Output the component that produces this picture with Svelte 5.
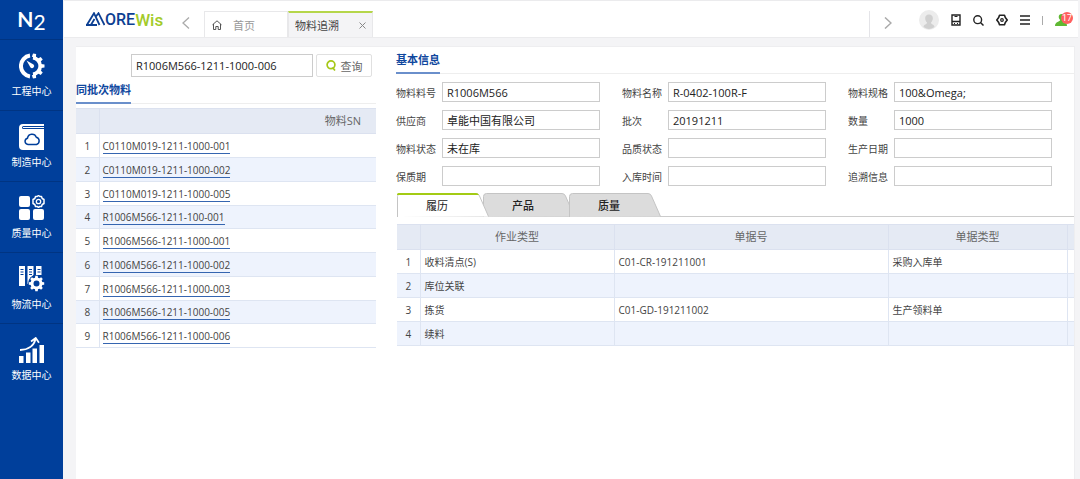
<script>
  const nav = [
    { label: '工程中心', icon: 'gear' },
    { label: '制造中心', icon: 'book' },
    { label: '质量中心', icon: 'grid' },
    { label: '物流中心', icon: 'files' },
    { label: '数据中心', icon: 'chart' }
  ];
  const serials = [
    'C0110M019-1211-1000-001',
    'C0110M019-1211-1000-002',
    'C0110M019-1211-1000-005',
    'R1006M566-1211-100-001',
    'R1006M566-1211-1000-001',
    'R1006M566-1211-1000-002',
    'R1006M566-1211-1000-003',
    'R1006M566-1211-1000-005',
    'R1006M566-1211-1000-006'
  ];
  const fields = [
    ['物料料号', 'R1006M566'],
    ['物料名称', 'R-0402-100R-F'],
    ['物料规格', '100&Omega;'],
    ['供应商', '卓能中国有限公司'],
    ['批次', '20191211'],
    ['数量', '1000'],
    ['物料状态', '未在库'],
    ['品质状态', ''],
    ['生产日期', ''],
    ['保质期', ''],
    ['入库时间', ''],
    ['追溯信息', '']
  ];
  const records = [
    ['收料清点(S)', 'C01-CR-191211001', '采购入库单'],
    ['库位关联', '', ''],
    ['拣货', 'C01-GD-191211002', '生产领料单'],
    ['续料', '', '']
  ];
  const tabs = ['履历', '产品', '质量'];
  const teeth = [0, 45, 90, 135, 180, 225, 270, 315];
  const halfTeeth = [12, 51, 90, 129, 168];
  let active = $state(0);
  let query = $state('R1006M566-1211-1000-006');
</script>

<div class="app">
  <nav class="side">
    <a class="brand" href="#home"><span class="n">N</span><span class="two">2</span></a>
    {#each nav as item}
      <a class="item" href="#{item.icon}">
        <svg width="26" height="26" viewBox="0 0 26 26" aria-hidden="true">
          {#if item.icon === 'gear'}
            <path d="M11 2.600A10.500 10.500 0 0 0 11 23.400" fill="none" stroke="#fff" stroke-width="4" />
            <path d="M14 4.600A8.500 8.500 0 0 1 14 21.400" fill="none" stroke="#fff" stroke-width="3.600" />
            {#each halfTeeth as angle}
              <path d="M10.900 4l.5-3.500h3.200l.5 3.500z" fill="#fff" transform="rotate({angle} 13 13)" />
            {/each}
            <path d="M7.500 7.500l7 4a2.100 2.100 0 1 1-3 3z" fill="#fff" />
          {:else if item.icon === 'book'}
            <path d="M4 0h21v2H4.500a1.500 1.500 0 0 0 0 3H25v21H4a4 4 0 0 1-4-4V4a4 4 0 0 1 4-4z" fill="#fff" />
            <path d="M4 3.500h21" stroke="#fff" stroke-width="1" />
            <path d="M9 20.500a3.200 3.200 0 0 1-.5-6.300 4.600 4.600 0 0 1 8.800-1 3.800 3.800 0 0 1 .2 7.300z" fill="none" stroke="#003f9b" stroke-width="1.500" />
          {:else if item.icon === 'grid'}
            <rect x="0" y="1" width="11" height="11" rx="2" fill="#fff" />
            <rect x="0" y="14" width="11" height="11" rx="2" fill="#fff" />
            <rect x="14" y="14" width="11" height="11" rx="2" fill="#fff" />
            <path d="M16.500 1.500h1.700L19.500.5l1.300 1h1.700l.7 2 1.800 1v4l-1.800 1-.7 2h-1.700l-1.300.8-1.300-.8h-1.700l-.7-2-1.800-1v-4l1.800-1z" fill="none" stroke="#fff" stroke-width="1.500" stroke-linejoin="round" />
            <circle cx="19.500" cy="6.500" r="2.200" fill="none" stroke="#fff" stroke-width="1.300" />
          {:else if item.icon === 'files'}
            <path d="M0 0h6v20H0zM8.500 0h6v9l-3.500 3-.5 5-2 1zM17 0h5.500v9H17z" fill="#fff" />
            <path d="M1.500 3.500h3M1.500 6h3M1.500 8.500h3M10 3.500h3M10 6h3M10 8.500h3M18.500 3.500h3M18.500 6h3" stroke="#003f9b" />
            <circle cx="17.500" cy="17.500" r="8.500" fill="#003f9b" />
            <circle cx="17.500" cy="17.500" r="4.500" fill="none" stroke="#fff" stroke-width="3" />
            {#each teeth as angle}
              <path d="M15.900 12.500l.4-2.700h2.400l.4 2.700z" fill="#fff" transform="rotate({angle} 17.500 17.500)" />
            {/each}
          {:else}
            <path d="M0 19h4.500v7H0zM7 15.500h4.500V26H7zM13.500 11.500H18V26h-4.500zM20.500 8H25v18h-4.500z" fill="#fff" />
            <path d="M1 13C9 13 15 9 16.500 2M12 4.500L16.700 1l3.300 4.800" fill="none" stroke="#fff" stroke-width="1.800" />
          {/if}
        </svg>
        <span>{item.label}</span>
      </a>
    {/each}
  </nav>

  <div class="main">
    <header class="top">
      <a class="logo" href="#home">
        <svg width="19" height="14" viewBox="0 0 19 14" aria-hidden="true">
          <path d="M0 13H11M1 12.800L8 1.200 13.500 13M5 12.800L8.500 7M9.500 5L12.500 1.200 18.500 13" fill="none" stroke="#0c3f92" stroke-width="1.800" />
        </svg><span class="ore">ORE</span><span class="wis">Wis</span>
      </a>
      <button class="arrow left" aria-label="向左">
        <svg width="8" height="12" viewBox="0 0 8 12"><path d="M7 .5L1 6l6 5.500" fill="none" stroke="#aaa" stroke-width="1.300" /></svg>
      </button>
      <div class="pages">
        <button class="page">
          <svg width="10" height="10" viewBox="0 0 10 10"><path d="M.5 4.800L5 .8l4.500 4M1.500 4v5.500h2.300v-3h2.400v3h2.300V4" fill="none" stroke="#555" /></svg>
          首页
        </button>
        <div class="page current">
          <span>物料追溯</span>
          <button class="close" aria-label="关闭"><svg width="7" height="7" viewBox="0 0 7 7"><path d="M.5.5l6 6M6.500.5l-6 6" stroke="#888" /></svg></button>
        </div>
      </div>
      <button class="arrow right" aria-label="向右">
        <svg width="8" height="12" viewBox="0 0 8 12"><path d="M1 .5L7 6l-6 5.500" fill="none" stroke="#aaa" stroke-width="1.500" /></svg>
      </button>
      <div class="tools">
        <button aria-label="用户">
          <svg width="20" height="20" viewBox="0 0 20 20"><circle cx="10" cy="10" r="10" fill="#ececec" /><path d="M10 4.500c5 0 4.500 6 2 8 0 2 3 1.500 3.500 4.500a9 9 0 0 1-11 0C5 14 8 14.500 8 12.500c-2.500-2-3-8 2-8z" fill="#d0d0d0" /></svg>
        </button>
        <button aria-label="终端">
          <svg width="10" height="12" viewBox="0 0 10 12"><path d="M1 1h8v10H1zM1 7.500h8" fill="none" stroke="#222" stroke-width="1.400" /><path d="M3.500 2.500h3M3 9.500h1M6 9.500h1" stroke="#222" /></svg>
        </button>
        <button aria-label="搜索">
          <svg width="11" height="11" viewBox="0 0 11 11"><circle cx="4.700" cy="4.700" r="3.900" fill="none" stroke="#222" stroke-width="1.400" /><path d="M7.500 7.500l3 3" stroke="#222" stroke-width="1.500" /></svg>
        </button>
        <button aria-label="设置">
          <svg width="12" height="12" viewBox="0 0 12 12"><path d="M3.500 1.300h5L9.300 3.500 11.200 6 9.300 8.500l-.8 2.200h-5L2.700 8.500.8 6l1.900-2.500z" fill="none" stroke="#222" stroke-width="1.600" stroke-linejoin="round" /><circle cx="6" cy="6" r="1.300" fill="none" stroke="#222" stroke-width="1.200" /></svg>
        </button>
        <button aria-label="菜单">
          <svg width="10" height="10" viewBox="0 0 10 10"><path d="M0 1h10M0 5h10M0 9h10" stroke="#222" stroke-width="1.700" /></svg>
        </button>
        <span class="bar"></span>
        <button class="notice" aria-label="消息">
          <svg width="12" height="12" viewBox="0 0 12 12"><path d="M6.500 0c3.500 0 3.300 4.500 1.300 5.800 0 1.500 4.200 1 4.200 6.200H0C0 7.500 5.200 8 5.200 5.800 3.200 4.500 3 0 6.500 0z" fill="#5fb832" /></svg>
          <b>17</b>
        </button>
      </div>
    </header>

    <div class="panel">
      <section class="list">
        <form class="search" onsubmit={(e) => e.preventDefault()}>
          <input aria-label="物料SN" bind:value={query} />
          <button>
            <svg width="10" height="11" viewBox="0 0 10 11"><circle cx="5" cy="4.800" r="3.900" fill="none" stroke="#a6c818" stroke-width="1.700" /><path d="M6.500 7.500L9 10.500" stroke="#a6c818" stroke-width="1.700" /></svg>
            查询
          </button>
        </form>
        <h2><span>同批次物料</span></h2>
        <table class="sn">
          <colgroup><col class="idx" /><col /></colgroup>
          <thead><tr><th></th><th>物料SN</th></tr></thead>
          <tbody>
            {#each serials as sn, i}
              <tr><td>{i + 1}</td><td><a href="#{sn}">{sn}</a></td></tr>
            {/each}
          </tbody>
        </table>
      </section>

      <section class="detail">
        <h2><span>基本信息</span></h2>
        <div class="fields">
          {#each fields as [label, value], i}
            <div class="field">
              <label for="f{i}">{label}</label>
              <input id="f{i}" {value} readonly />
            </div>
          {/each}
        </div>
        <div class="tabs" role="tablist">
          {#each tabs as tab, i}
            <button role="tab" aria-selected={active === i} class:on={active === i} onclick={() => (active = i)}>
              <svg width="92" height="24" viewBox="0 0 92 24" aria-hidden="true">
                <path class="shape" d="M.5 24V3.500a3 3 0 0 1 3-3H79q2.500 0 3.500 2.500L91.500 23.500" />
                {#if active === i}<path d="M0 2V1.500A1.500 1.500 0 0 1 1.500 0H79q2 0 3 2z" fill="#a3cb14" />{/if}
              </svg>
              <span>{tab}</span>
            </button>
          {/each}
        </div>
        <table class="log">
          <colgroup><col class="idx" /><col class="type" /><col class="no" /><col /><col class="more" /></colgroup>
          <thead><tr><th></th><th>作业类型</th><th>单据号</th><th>单据类型</th><th></th></tr></thead>
          <tbody>
            {#each records as row, i}
              <tr><td>{i + 1}</td>{#each row as cell}<td>{cell}</td>{/each}<td></td></tr>
            {/each}
          </tbody>
        </table>
      </section>
    </div>
  </div>
</div>

<style>
  :global(body) { margin: 0; background: #f4f4f6; }
  .app, .app :global(*) { box-sizing: border-box; }
  .app {
    display: flex;
    min-height: 100vh;
    font-family: "Open Sans", "Noto Sans CJK SC", sans-serif;
    font-size: 11px;
    color: #444;
  }
  button, input { font: inherit; color: inherit; }
  button { border: 0; padding: 0; background: none; cursor: pointer; }
  svg { display: block; flex: none; }
  a { color: inherit; text-decoration: none; }

  .side { flex: none; width: 63px; background: #003f9b; color: #fff; }
  .brand {
    display: flex;
    justify-content: center;
    height: 40px;
    padding-top: 7px;
    border-bottom: 1px solid #003482;
    font-family: Lato, sans-serif;
    font-size: 21px;
    line-height: 24px;
  }
  .n { font-weight: 700; }
  .two { padding-top: 3px; }
  .item {
    display: flex;
    flex-direction: column;
    align-items: center;
    gap: 4px;
    height: 71px;
    padding-top: 13px;
    border-bottom: 1px solid #003482;
    font-size: 10px;
    line-height: 16px;
  }
  .item:last-child { border-bottom: 0; }

  .main { flex: 1; min-width: 0; display: flex; flex-direction: column; padding-left: 1px; }
  .top {
    display: flex;
    height: 38px;
    margin-right: 2px;
    background: #fff;
    border-top: 1px solid #ebebed;
    border-bottom: 1px solid #ebebed;
  }
  .logo { display: flex; width: 115px; padding: 11px 0 0 22px; font-family: Roboto, sans-serif; line-height: 16px; }
  .ore { font-size: 16px; font-weight: 500; color: #0c3f92; }
  .wis { font-size: 17px; font-weight: 500; color: #a3cb2a; }
  .arrow { display: flex; align-items: center; padding-top: 8px; }
  .left { width: 25px; padding-left: 3px; }
  .right { width: 50px; margin-top: 10px; padding: 0 0 2px 14px; border-left: 1px solid #e4e4e8; }
  .pages { flex: 1; display: flex; align-items: flex-end; }
  .page {
    display: flex;
    align-items: center;
    gap: 11px;
    width: 84px;
    height: 26px;
    padding-left: 7px;
    border: 1px solid #e8e8ea;
    border-bottom: 0;
    color: #999;
  }
  .current {
    justify-content: space-between;
    width: 85px;
    padding: 0 6px;
    background: #f4f4f6;
    border-top: 2px solid #b5d64a;
    color: #444;
  }
  .tools { display: flex; align-items: center; gap: 12px; padding: 2px 4px 0 0; }
  .bar { width: 1px; height: 9px; background: #aaa; }
  .notice { position: relative; width: 19px; }
  .notice b {
    position: absolute;
    top: -2px;
    right: 1px;
    width: 12px;
    height: 12px;
    border-radius: 6px;
    background: #ff5f5f;
    color: #fff;
    font-family: Roboto, sans-serif;
    font-size: 9px;
    font-weight: 400;
    line-height: 12px;
  }

  .panel {
    flex: 1;
    display: flex;
    gap: 20px;
    margin: 8px 5px 0 12px;
    background: #fff;
    border: 1px solid #eeeef0;
    border-width: 1px 1px 0 0;
  }
  .list { flex: 0 0 300px; padding-top: 7px; }
  .search { display: flex; justify-content: flex-end; gap: 3px; padding-right: 4px; }
  .search input { width: 182px; height: 23px; padding: 0 4px; }
  .search button {
    display: flex;
    align-items: center;
    justify-content: center;
    gap: 5px;
    width: 56px;
    height: 23px;
    border: 1px solid #e0e0e0;
    border-radius: 2px;
    color: #666;
  }
  input { border: 1px solid #ccc; border-radius: 0; background: #fff; color: #222; outline: 0; }
  h2 { margin: 0; border-bottom: 1px solid #eee; font-size: 11px; line-height: 16px; color: #0f479e; }
  h2 span { display: inline-block; margin-bottom: -1px; padding-bottom: 4px; border-bottom: 2px solid #6a8fcb; vertical-align: top; }
  .list h2 { margin-top: 5px; }

  table { width: 100%; border-collapse: collapse; table-layout: fixed; line-height: 16px; }
  th, td { height: 24px; padding: 0 4px; border: 1px solid #dee5f2; font-size: 10px; text-align: left; white-space: nowrap; }
  th { height: 25px; background: #e5eaf4; border-color: #dbe1ef; color: #666; font-size: 11px; font-weight: 400; text-align: center; }
  tr > :first-child { padding: 0; border-left: 0; text-align: center; }
  tr > :last-child { border-right: 0; }
  tbody tr:nth-child(even) { background: #eef3fd; }
  .idx { width: 23px; }
  .sn { margin-top: 4px; }
  .sn th { padding-right: 15px; text-align: right; }
  .sn td { padding-left: 3px; }
  .sn tr:nth-child(4n) td { height: 23px; }
  .sn td:first-child { padding-left: 0; }
  .sn a { display: inline-block; border-bottom: 1px solid #3565b0; line-height: 13px; }

  .detail { flex: 1; min-width: 0; padding-top: 5px; }
  .fields { display: grid; grid-template-columns: repeat(3, 1fr); gap: 8px 0; padding-top: 8px; }
  .field { display: flex; align-items: center; padding-right: 22px; }
  .field label { flex: none; width: 46px; font-size: 10px; }
  .field input { flex: 1; min-width: 0; height: 20px; padding: 0 4px; }
  .tabs { display: flex; margin: 7px 0 7px 1px; border-bottom: 1px solid #ccc; }
  .tabs button { position: relative; width: 92px; height: 24px; margin: 0 -6px -1px 0; padding-right: 12px; color: #222; font-weight: 500; }
  .tabs svg { position: absolute; top: 0; left: 0; }
  .tabs span { position: relative; }
  .shape { fill: #dcdcdc; stroke: #c4c4c4; }
  .tabs .on { z-index: 1; font-weight: 400; }
  .on .shape { fill: #fff; }
  .log { width: calc(100% - 1px); margin-left: 1px; }
  .type { width: 194px; }
  .no { width: 274px; }
  .more { width: 7px; }
</style>
